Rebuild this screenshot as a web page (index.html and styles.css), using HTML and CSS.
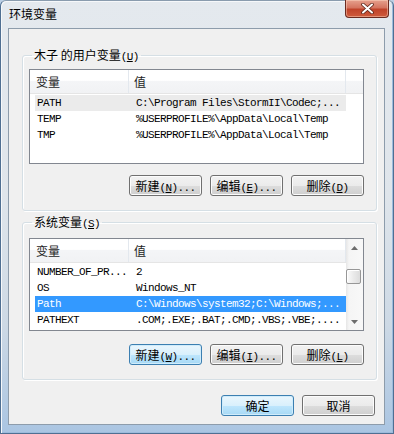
FILE: index.html
```html
<!DOCTYPE html>
<html lang="zh-CN">
<head>
  <meta charset="UTF-8">
  <title>环境变量</title>
  <link rel="stylesheet" href="styles.css">
</head>
<body>

<div class="window">
  <div class="titlebar">
    <span class="title">环境变量</span>
    <button class="close" title="关闭">
      <svg width="13" height="11" viewBox="0 0 13 11"><path d="M2 1.5 L11 9.5 M11 1.5 L2 9.5" stroke="#5a2418" stroke-width="3.6" stroke-linecap="round"/><path d="M2 1.5 L11 9.5 M11 1.5 L2 9.5" stroke="#fff" stroke-width="2" stroke-linecap="round"/></svg>
    </button>
  </div>

  <div class="client">
    <fieldset class="group user">
      <legend>木子 的用户变量<span class="acc">(<u>U</u>)</span></legend>
      <div class="list">
        <div class="list-main">
          <div class="list-head">
            <span class="col1">变量</span><span class="col2">值</span><span class="col-fill"></span>
          </div>
          <div class="rows">
            <div class="row sel-gray"><span class="col1">PATH</span><span class="col2">C:\Program Files\StormII\Codec;...</span></div>
            <div class="row"><span class="col1">TEMP</span><span class="col2">%USERPROFILE%\AppData\Local\Temp</span></div>
            <div class="row"><span class="col1">TMP</span><span class="col2">%USERPROFILE%\AppData\Local\Temp</span></div>
          </div>
        </div>
      </div>
      <div class="btn-row">
        <button class="btn">新建<span class="acc">(<u>N</u>)...</span></button>
        <button class="btn">编辑<span class="acc">(<u>E</u>)...</span></button>
        <button class="btn">删除<span class="acc">(<u>D</u>)</span></button>
      </div>
    </fieldset>

    <fieldset class="group sys">
      <legend>系统变量<span class="acc">(<u>S</u>)</span></legend>
      <div class="list">
        <div class="list-main">
          <div class="list-head">
            <span class="col1">变量</span><span class="col2">值</span>
          </div>
          <div class="rows">
            <div class="row"><span class="col1">NUMBER_OF_PR...</span><span class="col2">2</span></div>
            <div class="row"><span class="col1">OS</span><span class="col2">Windows_NT</span></div>
            <div class="row sel"><span class="col1">Path</span><span class="col2">C:\Windows\system32;C:\Windows;...</span></div>
            <div class="row"><span class="col1">PATHEXT</span><span class="col2">.COM;.EXE;.BAT;.CMD;.VBS;.VBE;....</span></div>
          </div>
        </div>
        <div class="scrollbar">
          <div class="sb-arrow">
            <svg width="7" height="4" viewBox="0 0 7 4"><path d="M0 4 L3.5 0 L7 4 Z" fill="#6d6d6d"/></svg>
          </div>
          <div class="sb-track"><div class="sb-thumb"></div></div>
          <div class="sb-arrow">
            <svg width="7" height="4" viewBox="0 0 7 4"><path d="M0 0 L3.5 4 L7 0 Z" fill="#6d6d6d"/></svg>
          </div>
        </div>
      </div>
      <div class="btn-row">
        <button class="btn focus">新建<span class="acc">(<u>W</u>)...</span></button>
        <button class="btn">编辑<span class="acc">(<u>I</u>)...</span></button>
        <button class="btn">删除<span class="acc">(<u>L</u>)</span></button>
      </div>
    </fieldset>

    <div class="footer">
      <button class="btn default">确定</button>
      <button class="btn">取消</button>
    </div>
  </div>
</div>

</body>
</html>
```

FILE: styles.css
```css
body {
  margin: 0;
  background: #bcd0e6;
  font: 12px "Noto Sans CJK SC", sans-serif;
  color: #000;
}
.window {
  width: 394px;
  height: 434px;
  box-sizing: border-box;
  display: flex;
  flex-direction: column;
  padding: 0 8px 8px 7px;
  border: 1px solid #4f6f92;
  border-top-color: #8a9cae;
  border-radius: 6px 6px 0 0;
  background: linear-gradient(to bottom, #e4e9ee 0, #dfe5eb 45%, #cdd9e5 75%, #aac5e2 100%);
  box-shadow: inset 1px 1px 0 #f6f8fa, inset -1px -1px 0 #9cbbdc;
}
.titlebar {
  height: 27px;
  display: flex;
  align-items: flex-start;
}
.title {
  margin: 5px 0 0 1px;
  line-height: 16px;
  font-size: 12px;
}
.close {
  margin: -1px -4px 0 auto;
  width: 44px;
  height: 18px;
  padding: 0;
  border: 1px solid #6b2a1f;
  border-top: 0;
  border-radius: 0 0 4px 4px;
  background: linear-gradient(to bottom, #e6a18e 0, #d57560 45%, #c0432a 55%, #cf5b3c 100%);
  box-shadow: inset 0 0 0 1px rgba(255, 220, 200, 0.45);
  display: flex;
  align-items: center;
  justify-content: center;
}
.client {
  flex: 1;
  display: flex;
  flex-direction: column;
  align-items: flex-start;
  background: #f0f0f0;
  border: 1px solid #8d9cab;
}
.group {
  width: 355px;
  box-sizing: border-box;
  margin: 0 0 0 13px;
  padding: 6px 12px 14px 6px;
  border: 1px solid #d5dfe5;
  border-radius: 3px;
  box-shadow: inset 1px 1px 0 #fff, 1px 1px 0 #fff;
  min-width: 0;
}
.group.user { margin-top: 18px; }
.group.sys { margin-top: 3px; padding-top: 8px; }
.group legend {
  padding: 0 2px;
  margin-left: 3px;
  line-height: 16px;
}
.acc {
  font: 11px "Liberation Mono", monospace;
  letter-spacing: -0.6px;
}
.list {
  display: flex;
  background: #fff;
  border: 1px solid #828790;
  box-sizing: border-box;
}
.user .list { height: 95px; }
.sys .list { height: 93px; }
.list-main {
  flex: 1;
  min-width: 0;
}
.list-head {
  display: flex;
  height: 24px;
  box-sizing: border-box;
  border-bottom: 1px solid #e5e5e5;
  background: linear-gradient(to bottom, #fff 0, #fff 45%, #f4f5f7 50%, #f1f2f4 100%);
  line-height: 23px;
  color: #1e1e1e;
}
.list-head span {
  border-right: 1px solid #e3e8ee;
  box-sizing: border-box;
}
.list-head .col1 { width: 99px; padding-left: 6px; }
.list-head .col2 { width: 217px; padding-left: 5px; }
.list-head .col-fill { flex: 1; border-right: 0; }
.rows {
  padding-top: 1px;
}
.row {
  display: flex;
  width: 311px;
  margin-left: 5px;
  height: 16px;
  line-height: 16px;
  font: 11px/16px "Liberation Mono", monospace;
  letter-spacing: -0.6px;
  white-space: nowrap;
}
.row .col1 { width: 94px; padding-left: 2px; }
.row .col2 { padding-left: 5px; }
.row.sel-gray { background: #ebebeb; }
.row.sel { background: #3399ff; color: #fff; }
.scrollbar {
  width: 17px;
  display: flex;
  flex-direction: column;
  background: linear-gradient(to right, #e6e6e6 0, #f5f5f5 3px, #f8f8f8 100%);
}
.sb-arrow {
  height: 17px;
  display: flex;
  align-items: center;
  justify-content: center;
}
.sb-track {
  flex: 1;
  padding: 13px 2px 0 0;
}
.sb-thumb {
  height: 15px;
  box-sizing: border-box;
  border: 1px solid #979797;
  border-radius: 2px;
  background: linear-gradient(to right, #fbfbfb 0, #eaeaea 50%, #dcdcdc 100%);
  box-shadow: inset 1px 1px 0 #fff;
}
.btn-row {
  display: flex;
  justify-content: flex-end;
  gap: 8px;
  margin-top: 11px;
}
.sys .btn-row { margin-top: 13px; }
.btn {
  width: 73px;
  height: 21px;
  padding: 0;
  box-sizing: border-box;
  font: 12px/19px "Noto Sans CJK SC", sans-serif;
  color: #000;
  border: 1px solid #707070;
  border-radius: 3px;
  background: linear-gradient(to bottom, #f2f2f2 0, #ebebeb 50%, #dddddd 51%, #cfcfcf 100%);
  box-shadow: inset 0 0 0 1px #fcfcfc;
}
.btn.focus, .btn.default {
  border-color: #3c7fb1;
  background: linear-gradient(to bottom, #eaf6fd 0, #d9f0fc 50%, #bee6fd 51%, #a7d9f5 100%);
  box-shadow: inset 0 0 0 1px #d0ecfb;
}
.footer {
  align-self: stretch;
  display: flex;
  justify-content: flex-end;
  gap: 8px;
  margin-top: 15px;
  padding-right: 9px;
}
```
